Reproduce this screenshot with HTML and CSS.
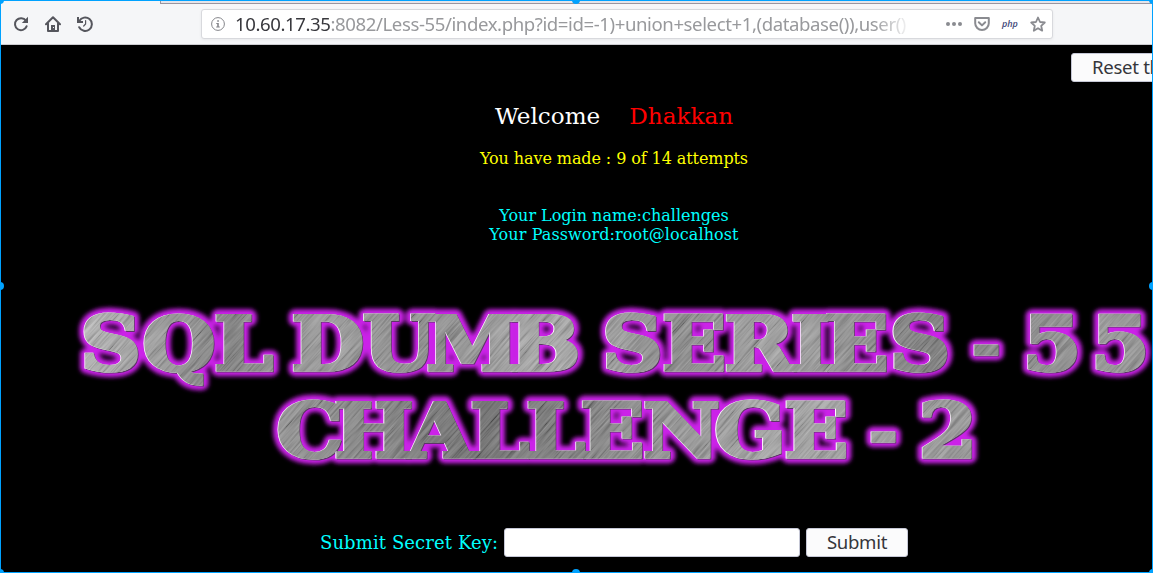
FILE: index.html
```
<!DOCTYPE html>
<html lang="en">
<head>
<meta charset="utf-8">
<title>Less-55</title>
<link rel="stylesheet" href="styles.css">
</head>
<body>
<div class="window">
  <header class="toolbar">
    <div class="tabline"></div>
    <nav class="nav">
      <svg class="ico" viewBox="0 0 16 16"><path d="M12.9 4.7A6 6 0 1 0 13.6 10.3" fill="none" stroke="#55565d" stroke-width="2" stroke-linecap="round"/><path d="M15 .8V7H8.8z" fill="#55565d"/></svg>
      <svg class="ico" viewBox="0 0 16 16"><path d="M1 8.3 8 1.3l7 7M3 7.5V15h10V7.5" fill="none" stroke="#55565d" stroke-width="2" stroke-linecap="round" stroke-linejoin="round"/><path d="M6 9h4v6H6z" fill="#55565d"/><path d="M8 11h1v1H8z" fill="#f5f6f8"/></svg>
      <svg class="ico" viewBox="0 0 16 16"><path d="M2.3 5A6.7 6.7 0 1 1 2.2 11.2" fill="none" stroke="#55565d" stroke-width="2" stroke-linecap="round"/><path d="M1 1v5h5" fill="none" stroke="#55565d" stroke-width="2"/><path d="M8.6 4.5V8L6.7 10" fill="none" stroke="#55565d" stroke-width="1.2" stroke-linecap="round"/></svg>
    </nav>
    <div class="urlbar">
      <svg class="info" viewBox="0 0 14 14"><circle cx="7" cy="7" r="6.4" fill="none" stroke="#85868b"/><path d="M6.2 3.2h1.7v1.6H6.2zM5.3 6h2.5v3.5h1v1H5.2v-1h1V7h-.9z" fill="#85868b"/></svg>
      <div class="url"><b>10.60.17.35</b>:8082/Less-55/index.php?id=id=-1)+union+select+1,(database()),user()</div>
      <svg class="act dots" viewBox="0 0 16 16"><g fill="#8a8b90"><circle cx="2" cy="8" r="2"/><circle cx="8" cy="8" r="2"/><circle cx="14" cy="8" r="2"/></g></svg>
      <svg class="act pocket" viewBox="0 0 16 16"><path d="M1.2 2h13.6v5.2a6.8 6.8 0 0 1-13.6 0z" fill="none" stroke="#8a8b90" stroke-width="2" stroke-linejoin="round"/><path d="M4.8 6.3 8 9.4l3.2-3.1" fill="none" stroke="#8a8b90" stroke-width="2" stroke-linecap="round" stroke-linejoin="round"/></svg>
      <span class="php">php</span>
      <svg class="act star" viewBox="0 0 16 16"><path d="m8 1.5 2 4.5 4.8.5-3.6 3.3 1 4.9L8 12.2l-4.2 2.5 1-4.9L1.2 6.500 6 6z" fill="none" stroke="#8a8b90" stroke-width="1.8" stroke-linejoin="round"/></svg>
    </div>
  </header>
  <main class="page">
    <button class="btn reset">Reset the Challenge!</button>
    <h1 class="welcome"><span>Welcome</span><span class="name">Dhakkan</span></h1>
    <p class="attempts"><span>You have made : 9 of 14 attempts</span></p>
    <p class="login"><span>Your Login name:challenges</span><br><span class="pass">Your Password:root@localhost</span></p>
    <svg class="banner" viewBox="0 290 1228 190">
      <defs>
        <g id="title" class="title" transform="translate(1.5 0) scale(1.12 1)">
          <text y="370.500" x="70.5 126 190 240 259 322.5 379.500 453.5 520 536.5 590 645.5 705 735 793 850 867 895 912 973">SQL DUMB SERIES <tspan class="dash" dy="-4">-</tspan><tspan dy="4"> 55</tspan></text>
          <text y="457.500" x="245.5 297 362.5 418.5 468.5 517 573 636.5 699 760 775 800 819">CHALLENGE <tspan class="dash" dy="-4">-</tspan><tspan dy="4"> 2</tspan></text>
        </g>
        <linearGradient id="metalA" gradientUnits="userSpaceOnUse" x1="80" y1="310" x2="1100" y2="450">
          <stop offset="0" stop-color="#b4b4b4"/><stop offset=".15" stop-color="#747474"/><stop offset=".24" stop-color="#929292"/><stop offset=".34" stop-color="#808080"/><stop offset=".46" stop-color="#a4a4a4"/><stop offset=".58" stop-color="#808080"/><stop offset=".68" stop-color="#999"/><stop offset=".82" stop-color="#707070"/><stop offset="1" stop-color="#8c8c8c"/>
        </linearGradient>
        <linearGradient id="metalB" gradientUnits="userSpaceOnUse" x1="270" y1="400" x2="980" y2="460">
          <stop offset="0" stop-color="#8c8c8c"/><stop offset=".3" stop-color="#606060"/><stop offset=".48" stop-color="#7c7c7c"/><stop offset=".7" stop-color="#a0a0a0"/><stop offset="1" stop-color="#8c8c8c"/>
        </linearGradient>
        <filter id="glow" x="-5%" y="-20%" width="110%" height="140%"><feGaussianBlur stdDeviation="2"/></filter>
        <filter id="brush" x="0" y="0" width="100%" height="100%"><feTurbulence type="fractalNoise" baseFrequency=".025 .55" numOctaves="2" seed="4"/><feColorMatrix values="1.8 0 0 0 -.4  1.8 0 0 0 -.4  1.8 0 0 0 -.4  0 0 0 0 .25"/></filter>
        <mask id="letters" maskUnits="userSpaceOnUse" x="0" y="290" width="1228" height="190"><use href="#title" fill="#fff" stroke="#fff" stroke-width="3.200"/></mask>
      </defs>
      <use href="#title" fill="#cb22e8" stroke="#cb22e8" stroke-width="12.5" stroke-linejoin="round" filter="url(#glow)"/>
      <use href="#title" x=".7" y=".7" fill="#5d3567" stroke="#5d3567" stroke-width="3.2"/>
      <use href="#title" x="-.8" y="-.8" fill="#fff" stroke="#fff" stroke-width="3.2"/>
      <g mask="url(#letters)">
        <rect x="0" y="290" width="1228" height="97" fill="url(#metalA)"/>
        <rect x="0" y="387" width="1228" height="93" fill="url(#metalB)"/>
        <rect x="-100" y="-350" width="1300" height="1500" transform="rotate(-48 614 385)" filter="url(#brush)"/>
      </g>
    </svg>
    <form class="secret">
      <label for="key">Submit Secret Key:</label>
      <input id="key" type="text">
      <button class="btn submit" type="button">Submit</button>
    </form>
  </main>
  <div class="selection"><i class="n"></i><i class="e"></i><i class="s"></i><i class="w"></i><i class="nw"></i><i class="ne"></i><i class="sw"></i><i class="se"></i></div>
</div>
</body>
</html>
```
FILE: styles.css
```
* { box-sizing: border-box; }
body { margin: 0; background: #000; }
.window { position: relative; width: 1153px; height: 573px; overflow: hidden; background: #000; }
.toolbar { height: 45px; background: #f5f6f8; border-bottom: 1px solid #ccccd0; }
.tabline { height: 4px; margin-left: 160px; border-left: 1px solid #99959f; border-bottom: 1px solid #99959f; background: #e4e4ea; }
.nav { float: left; display: flex; gap: 16px; padding: 12px 0 0 13px; }
.ico { width: 16px; height: 16px; }
.urlbar { display: flex; align-items: center; width: 852px; height: 30px; margin: 5px 0 0 201px; padding-left: 9px; background: #fff; border: 1px solid #d8d9dd; border-radius: 3px; box-shadow: 0 1px 3px rgba(0,0,0,.06); }
.info { width: 14px; height: 14px; flex: none; margin-right: 10px; }
.url { width: 677px; margin-right: 34px; overflow: hidden; white-space: nowrap; font: 18.6px/28px "Noto Sans", sans-serif; letter-spacing: -.41px; color: #98999c; -webkit-mask-image: linear-gradient(90deg, #000 638px, transparent 677px); }
.url b { font-weight: 400; color: #38383d; }
.act { width: 16px; height: 16px; flex: none; }
.pocket { margin-left: 12px; }
.php { width: 16px; margin: 0 12px; font: italic 600 9px/20px "Open Sans", sans-serif; color: #414778; }
.page { width: 1228px; height: 528px; display: flex; flex-direction: column; align-items: center; font-family: "DejaVu Serif", serif; color: #0ff; }
.btn { height: 29px; padding: 0 0 1px; border: 1px solid #c5c7d5; border-radius: 3px; background: #fbfbfc; color: #35363b; font: 18.6px/26px "Noto Sans", sans-serif; letter-spacing: -.3px; white-space: nowrap; }
.reset { align-self: flex-start; margin: 8px 0 0 1071px; padding-left: 20px; }
.welcome { display: flex; gap: 29px; margin: 20px 0 0; font-size: 23.1px; line-height: 28px; font-weight: 400; color: #fff; }
.name { color: #f00; }
.attempts { margin: 19px 0 0; font-size: 16px; line-height: 19px; letter-spacing: -.09px; color: #ff0; }
.login { margin: 38px 0 0; font-size: 16px; line-height: 19px; text-align: center; }
.pass { letter-spacing: .09px; }
.banner { width: 1228px; height: 190px; flex: none; margin-top: 46px; }
.title { font: 700 75px "DejaVu Serif", serif; }
.dash { font-size: 60px; }
.secret { display: flex; align-items: center; margin-top: 48px; height: 29px; font-size: 18px; letter-spacing: .1px; }
.secret label { width: 184px; white-space: nowrap; }
.secret input { width: 296px; height: 29px; border: 1px solid #c5c7d5; border-radius: 3px; background: #fff; }
.submit { width: 102px; margin-left: 6px; }
.selection { position: absolute; inset: 0; border: 1px solid #00a2ff; }
.selection i { position: absolute; width: 8px; height: 8px; border-radius: 50%; background: #00a2ff; }
.n { left: 571px; top: -5px; }
.s { left: 571px; bottom: -5px; }
.w { left: -5px; top: 281px; }
.e { right: -5px; top: 281px; }
.nw { left: -5px; top: -5px; }
.ne { right: -5px; top: -5px; }
.sw { left: -5px; bottom: -5px; }
.se { right: -5px; bottom: -5px; }
```
